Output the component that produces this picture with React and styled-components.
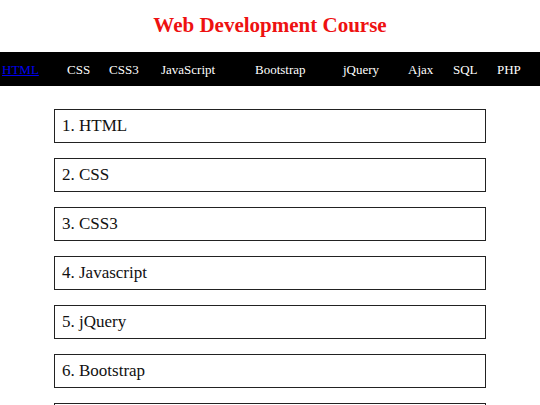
import styled, { createGlobalStyle } from 'styled-components';

const GlobalStyle = createGlobalStyle`
  body {
    margin: 0;
    background: #fff;
    font-family: "Liberation Serif", "Times New Roman", serif;
  }
`;

const Page = styled.div`
  display: flex;
  flex-direction: column;
`;

const Title = styled.h2`
  margin: 14px 0 15px 0;
  font-size: 21px;
  line-height: 23px;
  font-weight: bold;
  color: #ee1111;
  text-align: center;
`;

const Nav = styled.nav`
  display: flex;
  align-items: center;
  height: 34px;
  padding-left: 2px;
  background: #000;
`;

const NavItem = styled.a`
  flex: none;
  width: ${(p) => p.$slot}px;
  font-size: 13px;
  line-height: 15px;
  color: ${(p) => (p.$active ? '#0000ee' : '#fff')};
  text-decoration: ${(p) => (p.$active ? 'underline' : 'none')};
  white-space: nowrap;
`;

const List = styled.div`
  display: flex;
  flex-direction: column;
  gap: 15px;
  width: 80%;
  margin: 23px auto 0 auto;
`;

const Topic = styled.div`
  border: 1px solid #222;
  padding: 6px 7px;
  font-size: 17px;
  line-height: 20px;
  color: #111;
`;

const links = [
  ['HTML', 65],
  ['CSS', 42],
  ['CSS3', 52],
  ['JavaScript', 94],
  ['Bootstrap', 88],
  ['jQuery', 65],
  ['Ajax', 45],
  ['SQL', 44],
  ['PHP', 40],
];

const topics = ['HTML', 'CSS', 'CSS3', 'Javascript', 'jQuery', 'Bootstrap', 'Ajax', 'SQL', 'PHP'];

export default function App() {
  return (
    <Page>
      <GlobalStyle />
      <Title>Web Development Course</Title>
      <Nav>
        {links.map(([name, slot], i) => (
          <NavItem key={name} href="#" $slot={slot} $active={i === 0}>
            {name}
          </NavItem>
        ))}
      </Nav>
      <List>
        {topics.map((t, i) => (
          <Topic key={t}>{i + 1}. {t}</Topic>
        ))}
      </List>
    </Page>
  );
}
